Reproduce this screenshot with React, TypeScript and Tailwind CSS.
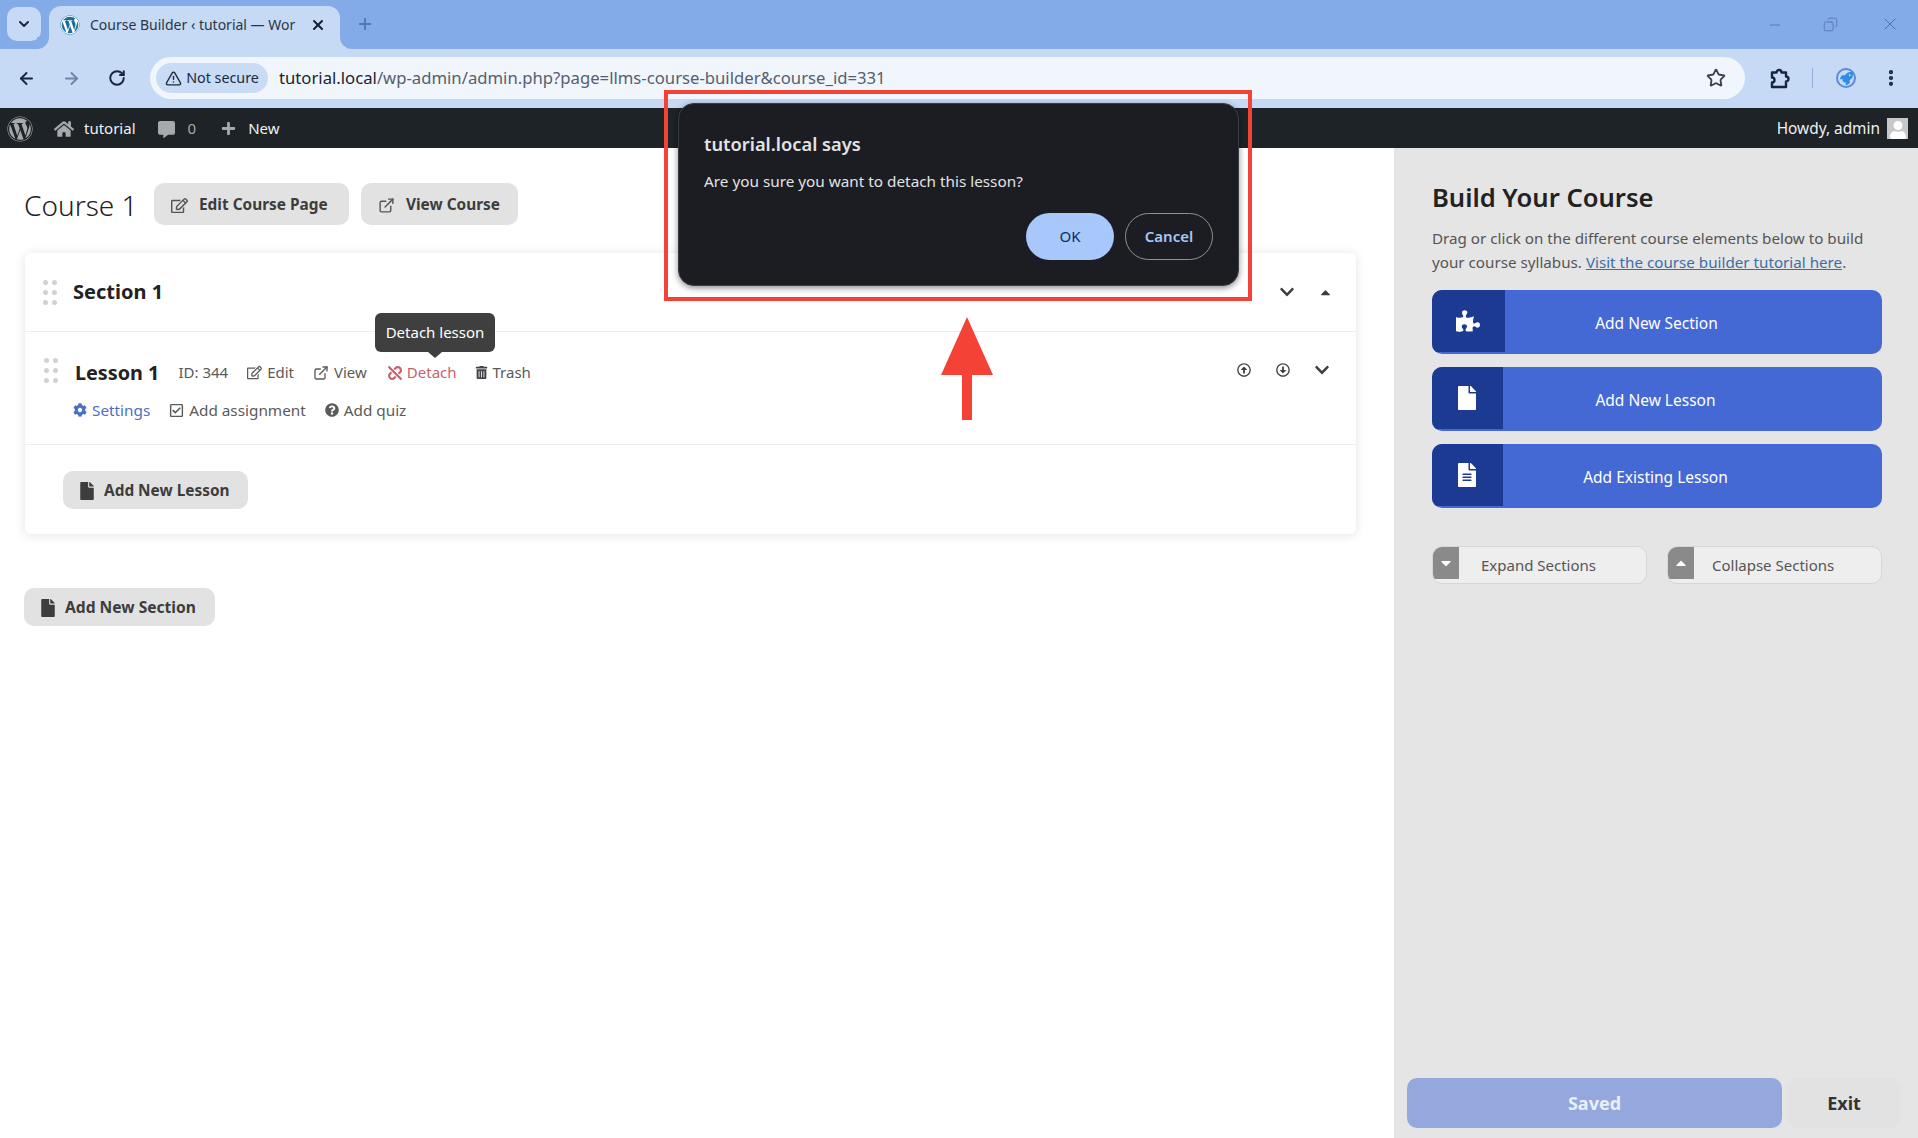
import { ArrowLeft, ArrowRight, ChevronDown, Copy, EllipsisVertical, ExternalLink, Minus, Plus, RotateCw, Star, TriangleAlert, X } from "lucide-react";
import {
  FaCaretDown,
  FaCaretUp,
  FaChevronDown,
  FaCog,
  FaCommentAlt,
  FaFile,
  FaFileAlt,
  FaHome,
  FaPlus,
  FaPuzzlePiece,
  FaQuestionCircle,
  FaRegArrowAltCircleDown,
  FaRegArrowAltCircleUp,
  FaRegCheckSquare,
  FaRegEdit,
  FaRocket,
  FaTrashAlt,
  FaUnlink,
  FaUser,
  FaWordpress,
} from "react-icons/fa";

function DragDots() {
  return (
    <div className="grid w-[14px] grid-cols-2 gap-x-[4px] gap-y-[5px]">
      {[0, 1, 2, 3, 4, 5].map((i) => (
        <span key={i} className="h-[5px] w-[5px] rounded-full bg-[#d2d2d2]" />
      ))}
    </div>
  );
}

function ExtensionIcon() {
  return (
    <svg width="24" height="24" viewBox="0 0 24 24" fill="none" stroke="currentColor" strokeWidth="2.4" strokeLinejoin="round" className="ml-[23px] text-[#16263c]">
      <path d="M4 6.5H8.5a2.5 2.5 0 0 1 5 0H18V10.5a2.5 2.5 0 0 1 0 5V21H4V16.5a2.5 2.5 0 0 0 0-5Z" />
    </svg>
  );
}

function BrowserChrome() {
  return (
    <div className="bg-[#c6daf5]">
      <div className="flex h-[49px] items-start bg-[#83abe8] pl-[7px]">
        <div className="mt-[7px] flex h-[34px] w-[34px] items-center justify-center rounded-[10px] bg-[#c6daf5]">
          <ChevronDown size={16} strokeWidth={3} className="text-[#1b2a3e]" />
        </div>
        <div className="relative mt-[6px] ml-[8px] flex h-[43px] w-[291px] items-center rounded-t-[12px] bg-[#c6daf5] pb-[6px] pl-[11px]">
          <span className="absolute -right-[12px] bottom-0 h-[12px] w-[12px] bg-[#c6daf5]">
            <span className="block h-full w-full rounded-bl-[12px] bg-[#83abe8]" />
          </span>
          <span className="absolute -left-[12px] bottom-0 h-[12px] w-[12px] bg-[#c6daf5]">
            <span className="block h-full w-full rounded-br-[12px] bg-[#83abe8]" />
          </span>
          <span className="flex h-[20px] w-[20px] items-center justify-center rounded-full bg-white">
            <FaWordpress size={20} className="text-[#1d6f99]" />
          </span>
          <span className="ml-[10px] w-[205px] whitespace-nowrap text-[14px] text-[#2a3646]">
            Course Builder ‹ tutorial — Wor
          </span>
          <X size={16} strokeWidth={3} className="ml-[15px] text-[#16202e]" />
        </div>
        <Plus size={18} strokeWidth={2.5} className="mt-[15px] ml-[16px] text-[#4f78b8]" />
        <div className="ml-auto flex items-center">
          <Minus size={16} strokeWidth={1.2} className="mt-[15px] mr-[40px] text-[#4f6fa8]" />
          <Copy size={15} strokeWidth={1.2} className="mt-[15px] mr-[42px] -scale-x-100 text-[#4f6fa8]" />
          <X size={20} strokeWidth={1.2} className="mt-[14px] mr-[18px] text-[#4f6fa8]" />
        </div>
      </div>
      <div className="flex h-[59px] items-center pb-[1px]">
        <div className="flex w-[150px] items-center pl-[17px]">
          <ArrowLeft size={19} strokeWidth={2.4} className="text-[#16263c]" />
          <ArrowRight size={19} strokeWidth={2.4} className="ml-[26px] text-[#6d86a8]" />
          <RotateCw size={18} strokeWidth={2.6} className="ml-[27px] text-[#16263c]" />
        </div>
        <div className="flex h-[42px] w-[1595px] items-center rounded-full bg-[#f1f6fd] pl-[6px]">
          <div className="flex h-[30px] w-[112px] items-center justify-center gap-[4px] rounded-full bg-[#c9dbf5] text-[14.3px] text-[#1b2a3e]">
            <TriangleAlert size={17} />
            <span>Not secure</span>
          </div>
          <span className="ml-[11px] whitespace-nowrap text-[16.7px] text-[#55606e]">
            <span className="text-[#1b2430]">tutorial.local</span>/wp-admin/admin.php?page=llms-course-builder&amp;course_id=331
          </span>
          <Star size={20} strokeWidth={2.2} className="mr-[19px] ml-auto text-[#37404c]" />
        </div>
        <ExtensionIcon />
        <span className="ml-[20px] h-[20px] w-px bg-[#8fb0dc]" />
        <span className="ml-[23px] flex h-[20px] w-[20px] items-center justify-center rounded-full border-2 border-[#5d88dc]">
          <FaRocket size={13} className="text-[#2f8de8]" />
        </span>
        <EllipsisVertical size={20} strokeWidth={3} className="ml-[25px] text-[#16263c]" />
      </div>
    </div>
  );
}

function AdminBar() {
  return (
    <div className="flex h-[40px] items-center bg-[#1d2327] pt-[1px] text-[15px] text-[#f0f0f1]">
      <FaWordpress size={26} className="ml-[7px] text-[#a7aaad]" />
      <FaHome size={20} className="ml-[21px] text-[#a7aaad]" />
      <span className="ml-[10px]">tutorial</span>
      <FaCommentAlt size={17} className="mt-[2px] ml-[22px] text-[#a7aaad]" />
      <span className="ml-[13px] text-[#a7aaad]">0</span>
      <FaPlus size={15} className="ml-[25px] text-[#a7aaad]" />
      <span className="ml-[12px]">New</span>
      <span className="ml-auto text-[15.4px]">Howdy, admin</span>
      <span className="mr-[10px] ml-[7px] flex h-[21px] w-[21px] items-end justify-center overflow-hidden bg-[#c8c8c8]">
        <FaUser size={18} className="text-white" />
      </span>
    </div>
  );
}

function GreyButton({ icon, label, className }: { icon: React.ReactNode; label: string; className: string }) {
  return (
    <div className={`flex items-center bg-[#e2e2e2] pt-[2px] text-[15.4px] font-bold text-[#3d3d3d] ${className}`}>
      {icon}
      <span>{label}</span>
    </div>
  );
}

function LessonAction({ icon, label, className }: { icon: React.ReactNode; label: string; className?: string }) {
  return (
    <span className={`flex items-center gap-[5px] ${className ?? ""}`}>
      {icon}
      <span>{label}</span>
    </span>
  );
}

function Builder() {
  return (
    <div className="w-[1394px] bg-white pt-[35px] pl-[24px]">
      <div className="flex h-[42px] items-center">
        <h1 className="w-[130px] pt-[2px] text-[28px] font-light text-[#222]">Course 1</h1>
        <GreyButton
          className="h-[42px] w-[195px] rounded-[10px] pl-[17px]"
          icon={<FaRegEdit size={17} className="mr-[11px] text-[#555]" />}
          label="Edit Course Page"
        />
        <GreyButton
          className="ml-[12px] h-[42px] w-[157px] rounded-[10px] pl-[17px]"
          icon={<ExternalLink size={17} className="mr-[11px] text-[#555]" />}
          label="View Course"
        />
      </div>
      <div className="mt-[28px] ml-px w-[1331px] rounded-[6px] bg-white shadow-[0_1px_12px_rgba(0,0,0,0.11)]">
        <div className="flex h-[79px] items-center border-b border-[#eeeeee] pr-[23px] pl-[18px]">
          <DragDots />
          <span className="ml-[16px] text-[20px] font-bold text-[#222]">Section 1</span>
          <FaChevronDown size={16} className="ml-auto text-[#3d3d3d]" />
          <FaCaretUp size={15} className="ml-[23px] text-[#3d3d3d]" />
        </div>
        <div className="relative flex h-[113px] flex-col border-b border-[#eeeeee]">
          <div className="flex h-[67px] items-center pt-[14px] pr-[26px] text-[15px] text-[#5a5a5a]">
            <div className="ml-[19px] -translate-y-[2px]">
              <DragDots />
            </div>
            <span className="ml-[17px] text-[19.8px] font-bold text-[#222]">Lesson 1</span>
            <span className="ml-[19px]">ID: 344</span>
            <LessonAction className="ml-[19px]" icon={<FaRegEdit size={15} />} label="Edit" />
            <LessonAction className="ml-[19px]" icon={<ExternalLink size={16} />} label="View" />
            <LessonAction
              className="ml-[21px] text-[#c9606c]"
              icon={<FaUnlink size={14} />}
              label="Detach"
            />
            <LessonAction className="ml-[18px]" icon={<FaTrashAlt size={13} className="text-[#444]" />} label="Trash" />
            <FaRegArrowAltCircleUp size={14} className="mb-[6px] ml-auto text-[#3d3d3d]" />
            <FaRegArrowAltCircleDown size={14} className="mb-[6px] ml-[25px] text-[#3d3d3d]" />
            <FaChevronDown size={16} className="mb-[6px] ml-[24px] text-[#3d3d3d]" />
          </div>
          <div className="flex items-center pl-[48px] text-[15.3px] text-[#5a5a5a]">
            <LessonAction className="text-[#4a6fc9]" icon={<FaCog size={14} />} label="Settings" />
            <LessonAction className="ml-[19px]" icon={<FaRegCheckSquare size={15} />} label="Add assignment" />
            <LessonAction className="ml-[19px]" icon={<FaQuestionCircle size={14} />} label="Add quiz" />
          </div>
          <div className="absolute top-[-19px] left-[350px] flex h-[39px] w-[120px] items-center justify-center rounded-[6px] bg-[#3f3f3f] text-[15px] text-white">
            Detach lesson
            <span className="absolute -bottom-[6px] left-[53px] h-0 w-0 border-x-[7px] border-t-[6px] border-x-transparent border-t-[#3f3f3f]" />
          </div>
        </div>
        <div className="px-[38px] pt-[26px] pb-[25px]">
          <GreyButton
            className="h-[38px] w-[185px] rounded-[10px] pl-[15px]"
            icon={<FaFile size={18} className="mr-[8px]" />}
            label="Add New Lesson"
          />
        </div>
      </div>
      <GreyButton
        className="mt-[54px] h-[38px] w-[191px] rounded-[10px] pl-[15px] text-[15.6px]"
        icon={<FaFile size={18} className="mr-[8px]" />}
        label="Add New Section"
      />
    </div>
  );
}

function ElementButton({ icon, label, dark }: { icon: React.ReactNode; label: string; dark: string }) {
  return (
    <div className="flex h-[64px] overflow-hidden rounded-[10px] bg-[#4569d4] text-[15.5px] text-white">
      <div className={`mb-[2px] flex items-center justify-center bg-[#1c3a91] pr-[2px] ${dark}`}>{icon}</div>
      <div className="flex flex-1 items-center justify-center pt-[3px] pr-[74px]">{label}</div>
    </div>
  );
}

function ToggleButton({ icon, label, className }: { icon: React.ReactNode; label: string; className: string }) {
  return (
    <div className="flex h-[38px] w-[215px] overflow-hidden rounded-[10px] border border-[#d6d6d6] bg-[#eeeeee] text-[15px] text-[#555]">
      <div className="mb-[4px] flex w-[26px] items-center justify-center bg-[#8a8a8a]">{icon}</div>
      <div className={`flex items-center pt-[1px] ${className}`}>{label}</div>
    </div>
  );
}

function Sidebar() {
  return (
    <div className="flex flex-1 flex-col bg-[#e5e5e5] pt-[31px]">
      <div className="pr-[36px] pl-[38px]">
        <h2 className="text-[25.6px] leading-[37px] font-semibold text-[#222]">Build Your Course</h2>
        <p className="mt-[10px] text-[15.2px] leading-[24px] text-[#555]">
          Drag or click on the different course elements below to build your course syllabus.{" "}
          <span className="text-[#3b6ea5] underline">Visit the course builder tutorial here</span>.
        </p>
        <div className="mt-[16px] flex flex-col gap-[13px]">
          <ElementButton dark="w-[73px]" icon={<FaPuzzlePiece size={24} />} label="Add New Section" />
          <ElementButton dark="w-[71px]" icon={<FaFile size={24} />} label="Add New Lesson" />
          <ElementButton dark="w-[71px]" icon={<FaFileAlt size={24} />} label="Add Existing Lesson" />
        </div>
        <div className="mt-[38px] flex justify-between">
          <ToggleButton className="ml-[22px]" icon={<FaCaretDown size={16} className="text-white" />} label="Expand Sections" />
          <ToggleButton className="ml-[18px]" icon={<FaCaretUp size={16} className="text-white" />} label="Collapse Sections" />
        </div>
      </div>
      <div className="mt-auto mb-[10px] ml-[13px] flex h-[50px] gap-[6px] text-[18px] font-bold">
        <div className="flex w-[375px] items-center justify-center rounded-[10px] bg-[#95a8dd] text-[#e9effb]">Saved</div>
        <div className="flex w-[112px] items-center justify-center rounded-[10px] bg-[#e2e2e2] text-[#333]">Exit</div>
      </div>
    </div>
  );
}

function Annotation() {
  return (
    <>
      <div className="absolute top-[90px] left-[664px] h-[211px] w-[588px] border-4 border-[#f44336]" />
      <div className="absolute top-[103px] left-[678px] h-[183px] w-[561px] rounded-[16px] border border-[#3a3d42] bg-[#1b1d22] px-[25px] pt-[27px] shadow-[0_2px_6px_rgba(0,0,0,0.45)]">
        <div className="text-[18.3px] leading-[26px] font-semibold text-[#e3e3e3]">tutorial.local says</div>
        <div className="mt-[12px] text-[15.3px] leading-[24px] text-[#e3e3e3]">Are you sure you want to detach this lesson?</div>
        <div className="mt-[20px] flex justify-end gap-[11px] text-[15px]">
          <div className="flex h-[47px] w-[88px] items-center justify-center rounded-full bg-[#a8c7fa] text-[#062e6f]">OK</div>
          <div className="flex h-[47px] w-[88px] items-center justify-center rounded-full border border-[#8e918f] font-semibold text-[#a8c7fa]">Cancel</div>
        </div>
      </div>
      <div className="absolute top-[317px] left-[941px] flex w-[52px] flex-col items-center">
        <span className="h-0 w-0 border-x-[26px] border-b-[58px] border-x-transparent border-b-[#f44336]" />
        <span className="h-[45px] w-[10px] bg-[#f44336]" />
      </div>
    </>
  );
}

export default function App() {
  return (
    <div className="relative flex h-[1138px] w-[1918px] flex-col overflow-hidden bg-white font-['Noto_Sans','Open_Sans',sans-serif]">
      <BrowserChrome />
      <AdminBar />
      <div className="flex flex-1">
        <Builder />
        <Sidebar />
      </div>
      <Annotation />
    </div>
  );
}
